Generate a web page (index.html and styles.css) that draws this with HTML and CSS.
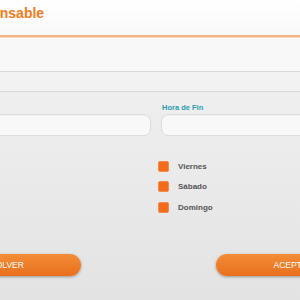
FILE: index.html
```html
<!DOCTYPE html>
<html lang="es">
<head>
  <meta charset="UTF-8">
  <meta name="viewport" content="width=device-width, initial-scale=1.0">
  <title>Responsable</title>
  <link rel="stylesheet" href="styles.css">
</head>
<body>
  <div class="page">
    <header class="top">
      <h1 class="title">Responsable</h1>
    </header>
    <div class="row row-main"></div>
    <div class="row row-sub"></div>
    <form class="form">
      <div class="cols">
        <div class="col">
          <label class="field-label">Hora de Inicio</label>
          <input type="text" class="field">
          <ul class="days">
            <li class="day"><span class="check"></span><span>Lunes</span></li>
            <li class="day"><span class="check"></span><span>Martes</span></li>
            <li class="day"><span class="check"></span><span>Miércoles</span></li>
          </ul>
        </div>
        <div class="col">
          <label class="field-label">Hora de Fin</label>
          <input type="text" class="field">
          <ul class="days">
            <li class="day"><span class="check"></span><span>Viernes</span></li>
            <li class="day"><span class="check"></span><span>Sábado</span></li>
            <li class="day"><span class="check"></span><span>Domingo</span></li>
          </ul>
        </div>
      </div>
      <div class="actions">
        <button type="button" class="btn">VOLVER</button>
        <button type="button" class="btn">ACEPTAR</button>
      </div>
    </form>
  </div>
</body>
</html>
```

FILE: styles.css
```css
body {
  margin: 0;
  font-family: 'Liberation Sans', Arial, sans-serif;
  background: linear-gradient(180deg, #f4f4f4 0%, #e3e3e3 100%);
  height: 300px;
  overflow: hidden;
}

.page {
  width: 470px;
  margin-left: -80px;
}

.top {
  height: 35px;
  background: linear-gradient(180deg, #ffffff 0%, #f9f9f9 100%);
  border-bottom: 2px solid #f6b282;
  box-shadow: 0 1px 0 #fbdac2;
  padding-left: 37px;
}

.title {
  margin: 0;
  padding-top: 6px;
  font-size: 14px;
  line-height: 14px;
  font-weight: bold;
  color: #f27b21;
}

.row {
  border-bottom: 1px solid #d9d9d9;
}

.row-main {
  margin-top: 1px;
  height: 33px;
  background: #f8f8f8;
}

.row-sub {
  height: 19px;
  background: #f2f2f2;
}

.form {
  padding: 11px 0 0 11px;
}

.cols {
  display: flex;
  gap: 10px;
}

.col {
  width: 220px;
  display: flex;
  flex-direction: column;
}

.field-label {
  padding-left: 1px;
  font-family: 'Liberation Sans Narrow', 'Liberation Sans', Arial, sans-serif;
  font-size: 7.5px;
  line-height: 10px;
  font-weight: bold;
  color: #2a9cab;
}

.field {
  margin: 1px 0 0;
  height: 22px;
  box-sizing: border-box;
  border: 1px solid #dcdcdc;
  border-radius: 7px;
  background: #f8f8f8;
  box-shadow: inset 0 1px 1px rgba(0, 0, 0, 0.03);
}

.days {
  list-style: none;
  margin: 20px 0 0 -3px;
  padding: 0;
}

.day {
  height: 20.5px;
  display: flex;
  align-items: center;
  gap: 9px;
  font-size: 8px;
  font-weight: bold;
  color: #555;
}

.check {
  width: 11px;
  height: 11px;
  box-sizing: border-box;
  border-radius: 2px;
  background: #f26c1c;
  border: 1px solid #f48a4a;
}

.actions {
  display: flex;
  justify-content: space-between;
  width: 437px;
  margin: 36px 0 0 2px;
}

.btn {
  height: 22px;
  border: none;
  border-radius: 11px;
  background: linear-gradient(180deg, #f28d36 0%, #e96f1d 100%);
  box-shadow: 0 1px 3px rgba(0, 0, 0, 0.35);
  color: #fff;
  font-family: 'Liberation Sans Narrow', 'Liberation Sans', Arial, sans-serif;
  font-size: 8.5px;
  padding: 0 57px;
}
```
